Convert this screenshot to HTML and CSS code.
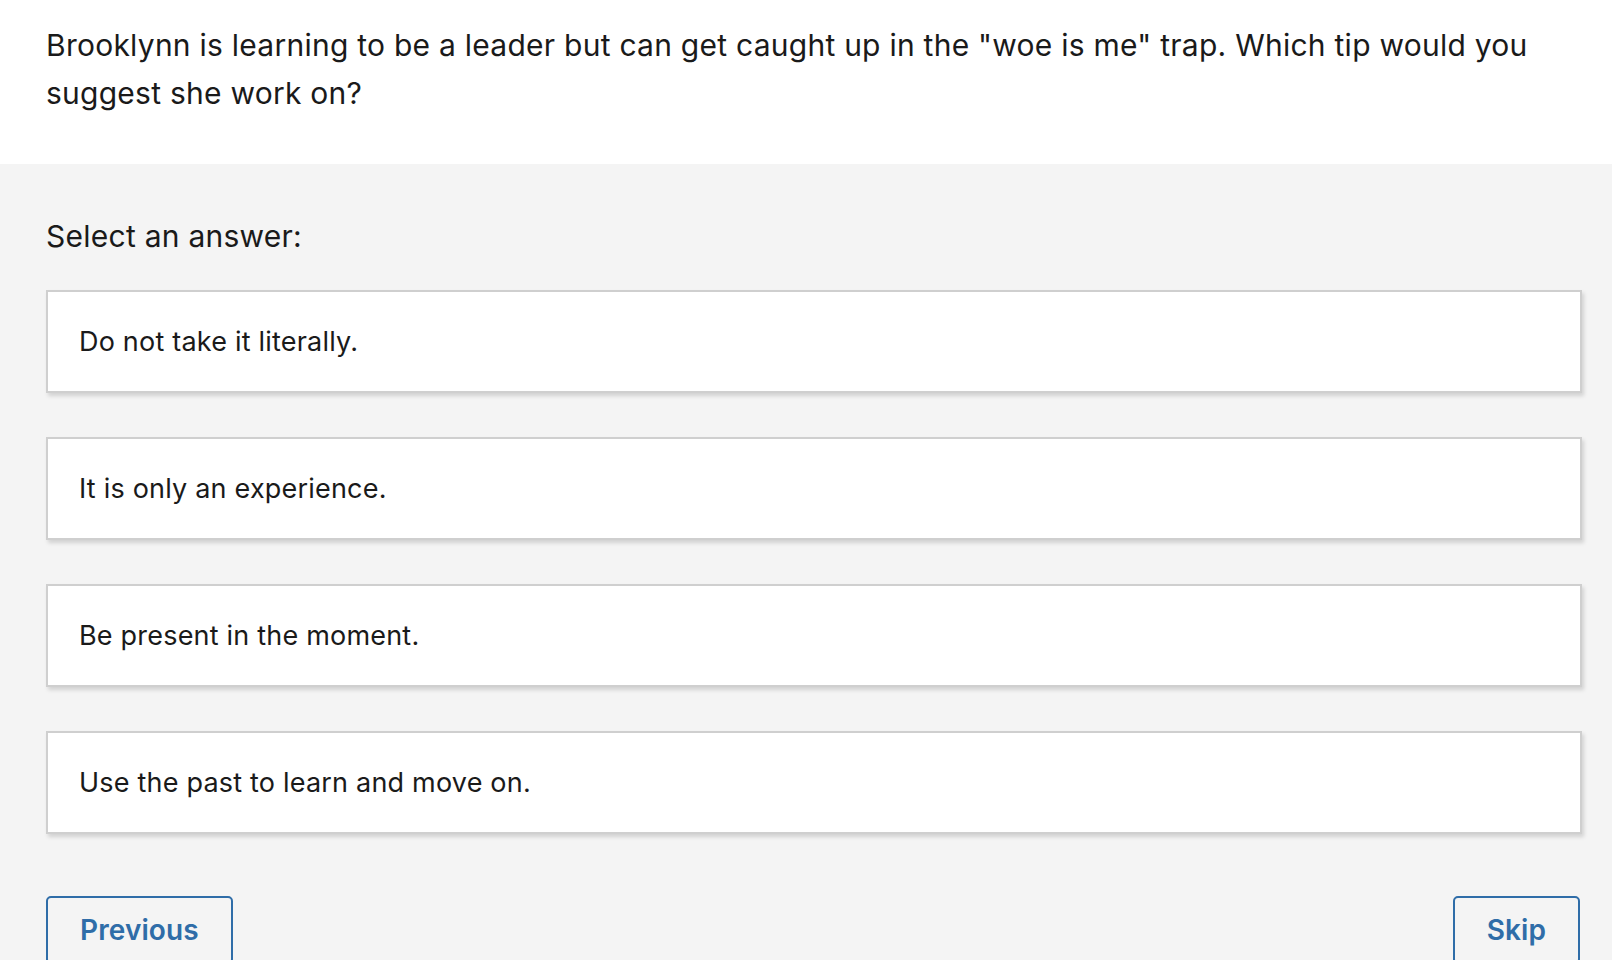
FILE: index.html
```html
<!DOCTYPE html>
<html lang="en">
<head>
<meta charset="utf-8">
<title>Question</title>
<link rel="stylesheet" href="styles.css">
</head>
<body>
<header class="question">
  <p class="question-text">Brooklynn is learning to be a leader but can get caught up in the "woe is me" trap. Which tip would you suggest she work on?</p>
</header>
<main class="answers">
  <h2 class="prompt">Select an answer:</h2>
  <ul class="options">
    <li class="option">Do not take it literally.</li>
    <li class="option">It is only an experience.</li>
    <li class="option">Be present in the moment.</li>
    <li class="option">Use the past to learn and move on.</li>
  </ul>
  <div class="nav">
    <button class="btn">Previous</button>
    <button class="btn">Skip</button>
  </div>
</main>
</body>
</html>
```

FILE: styles.css
```css
html, body {
  margin: 0;
  padding: 0;
}
body {
  font-family: Inter, "Liberation Sans", sans-serif;
  color: #1a1a1a;
  background: #f4f4f4;
  height: 960px;
  overflow: hidden;
}
.question {
  background: #ffffff;
  height: 164px;
  box-sizing: border-box;
  padding: 21px 40px 0 46px;
}
.question-text {
  margin: 0;
  font-size: 30px;
  letter-spacing: 0.25px;
  line-height: 48px;
}
.answers {
  padding: 48px 30px 0 46px;
}
.prompt {
  margin: 0;
  font-size: 30px;
  letter-spacing: 0.25px;
  font-weight: 400;
  line-height: 48px;
}
.options {
  list-style: none;
  margin: 30px 0 0;
  padding: 0;
  display: flex;
  flex-direction: column;
  gap: 44px;
}
.option {
  background: #ffffff;
  border: 2px solid #cfcfcf;
  box-shadow: 2px 3px 4px rgba(0, 0, 0, 0.14);
  height: 99px;
  display: flex;
  align-items: center;
  padding: 0 0 0 31px;
  font-size: 27px;
  letter-spacing: 0.2px;
}
.nav {
  display: flex;
  justify-content: space-between;
  margin-top: 62px;
  padding-right: 2px;
}
.btn {
  font-family: Inter, "Liberation Sans", sans-serif;
  font-size: 28px;
  font-weight: 600;
  letter-spacing: 0.1px;
  color: #2f6da8;
  background: transparent;
  border: 2px solid #2f6da8;
  border-radius: 5px;
  padding: 0 32px;
  height: 68px;
  line-height: 62px;
}
```
